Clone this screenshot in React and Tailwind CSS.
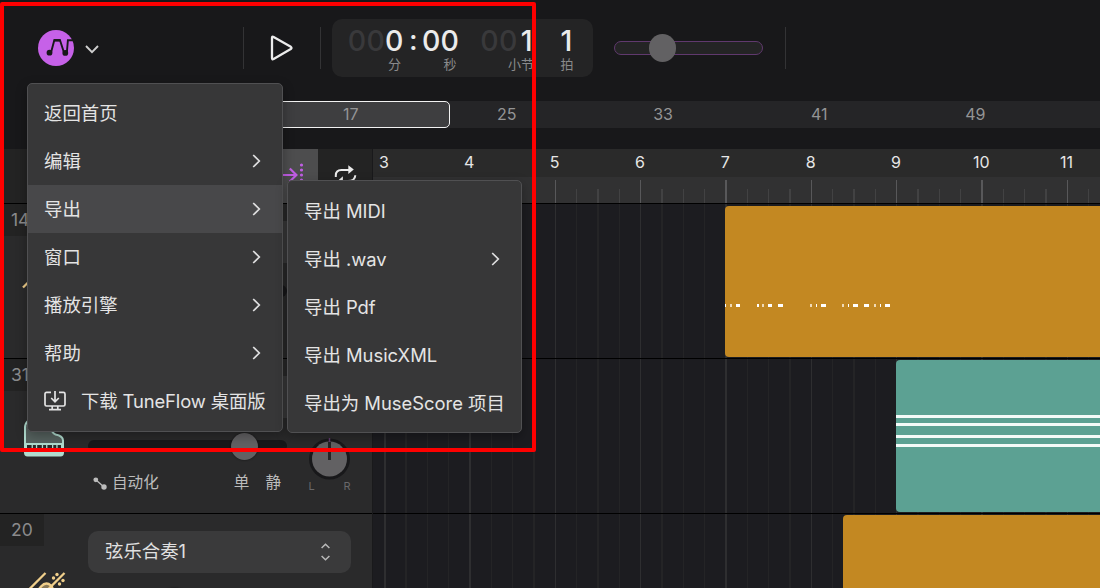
import React from "react";

const MAIN_MENU = [
  { label: "返回首页" },
  { label: "编辑", sub: true },
  { label: "导出", sub: true, active: true },
  { label: "窗口", sub: true },
  { label: "播放引擎", sub: true },
  { label: "帮助", sub: true },
  { label: "下载 TuneFlow 桌面版", icon: true },
];

const EXPORT_MENU = [
  { label: "导出 MIDI" },
  { label: "导出 .wav", sub: true },
  { label: "导出 Pdf" },
  { label: "导出 MusicXML" },
  { label: "导出为 MuseScore 项目" },
];

const SECTIONS = [9, 17, 25, 33, 41, 49];
const BARS = [3, 4, 5, 6, 7, 8, 9, 10, 11];
const BEATS = Array.from({ length: 36 }, (_, i) => i);

/* Note onsets in the first clip: [x, width, faded] */
const NOTES = [
  [0, 1, 0], [5, 2, 1], [10.5, 4.5, 0], [32, 1.5, 0], [37, 2, 1], [42.5, 4.5, 0], [53, 5, 0],
  [85, 2, 1], [90.5, 1.5, 0], [96, 4.5, 0], [117, 2, 1], [122.5, 1.5, 0], [128, 4.5, 0],
  [138.5, 5, 0], [149, 2, 1], [154.5, 1.5, 0], [160, 4.5, 0],
];

function Logo() {
  return (
    <svg width="36" height="36" viewBox="0 0 36 36" fill="none">
      <circle cx="18" cy="18" r="18" fill="#c661e8" />
      <path d="M12.9 23 L16.3 10.2 H22 L25.8 22 M28.9 22 L29.9 10.2 H35.5" stroke="#18181a" strokeWidth="1.9" />
      <path d="M15.8 10.3 H22.4" stroke="#18181a" strokeWidth="2.4" />
      <circle cx="11.5" cy="22.7" r="2.9" fill="#18181a" />
      <circle cx="27.3" cy="22.9" r="2.9" fill="#18181a" />
    </svg>
  );
}

function ChevronRight() {
  return (
    <svg width="9" height="14" viewBox="0 0 9 14" fill="none" stroke="#dededf" strokeWidth="1.7">
      <path d="M1.2 1 L7.3 7 L1.2 13" />
    </svg>
  );
}

function DownloadIcon() {
  return (
    <svg width="22" height="20" viewBox="0 0 22 20" fill="none" stroke="#e4e4e4" strokeWidth="1.7">
      <path d="M7 1.4 H2.6 Q1 1.4 1 3 V13.4 Q1 15 2.6 15 H19.4 Q21 15 21 13.4 V3 Q21 1.4 19.4 1.4 H15" />
      <path d="M11 0 V10.4 M7.2 7 L11 10.8 L14.8 7 M8.2 15 V18.4 M13.8 15 V18.4 M5 18.7 H17" />
    </svg>
  );
}

function MenuItem({ item }) {
  return (
    <div className={"flex h-12 items-center pl-4 pr-[21px] " + (item.active ? "bg-[#48484a]" : "")}>
      {item.icon && (
        <span className="mr-[15px] shrink-0">
          <DownloadIcon />
        </span>
      )}
      <span className={"grow pt-[2px] whitespace-nowrap " + (item.icon ? "tracking-[-0.12px]" : "")}>{item.label}</span>
      {item.sub && <ChevronRight />}
    </div>
  );
}

function Divider() {
  return <div className="h-[42px] w-px shrink-0 bg-[#333335]" />;
}

function Digits({ dim, lit }) {
  return (
    <div className="flex text-[28.5px] leading-[30px] font-medium">
      {dim.split("").map((d, i) => (
        <span key={i} className="w-[18.6px] text-center text-[#39393b]">{d}</span>
      ))}
      {lit.split("").map((d, i) => (
        <span key={i} className="w-[18.6px] text-center text-[#ebebeb]">{d}</span>
      ))}
    </div>
  );
}

function Header() {
  return (
    <header className="flex h-[101px] items-center pb-[5px]">
      <div className="flex w-[243px] shrink-0 items-center gap-[11px] pl-[38px]">
        <Logo />
        <svg width="14" height="9" viewBox="0 0 14 9" fill="none" stroke="#cfcfcf" strokeWidth="1.9" className="mt-[2px]">
          <path d="M1 1 L7 7.2 L13 1" />
        </svg>
      </div>
      <Divider />
      <div className="flex w-[76px] shrink-0 justify-center">
        <svg width="24" height="26" viewBox="0 0 24 26" fill="none" stroke="#ececec" strokeWidth="2.3" strokeLinejoin="round">
          <path d="M2 3 Q2 1.2 3.6 2 L20.8 11.8 Q22.2 13 20.8 14 L3.6 24 Q2 24.8 2 23 Z" />
        </svg>
      </div>
      <Divider />
      <div className="ml-[11px] flex h-[58px] w-[261px] shrink-0 rounded-[10px] bg-[#242425] pl-[15.5px] pt-[7px] text-[13px] text-[#8a8a8b]">
        <div className="flex w-[56px] flex-col items-end">
          <Digits dim="00" lit="0" />
          <span className="mr-[2.5px] leading-4">分</span>
        </div>
        <span className="w-[18.5px] pl-px text-center text-[28.5px] leading-[27px] font-medium text-[#ebebeb]">:</span>
        <div className="flex w-[37px] flex-col items-end">
          <Digits dim="" lit="00" />
          <span className="mr-[2.5px] leading-4">秒</span>
        </div>
        <div className="ml-[22px] flex w-[55px] flex-col items-end">
          <Digits dim="00" lit="1" />
          <span className="mr-[2px] leading-4">小节</span>
        </div>
        <div className="ml-[20.5px] flex w-[20px] flex-col items-center">
          <Digits dim="" lit="1" />
          <span className="translate-x-[0.5px] leading-4">拍</span>
        </div>
      </div>
      <div className="ml-[21px] mr-[22px] flex h-[14px] w-[149px] shrink-0 items-center rounded-full border border-[#60396e] bg-[#242425] pl-[33.5px]">
        <div className="size-[27.5px] shrink-0 rounded-full bg-[#626163]" />
      </div>
      <Divider />
    </header>
  );
}

function Overview() {
  return (
    <div className="relative h-[27px] overflow-hidden pl-[116.4px]">
      <div className="absolute inset-y-0 left-[32px] right-0 bg-[#252527]" />
      <div className="absolute inset-y-0 left-[32px] w-[418px] rounded-[5px] border border-[#f2f2f2] bg-[#3e3e40]" />
      <div className="relative flex h-full items-center pb-[2px] text-base text-[#949495]">
        {SECTIONS.map((n) => (
          <span key={n} className="w-[156.2px] shrink-0 text-center">{n}</span>
        ))}
      </div>
    </div>
  );
}

function PanelToolbar() {
  return (
    <div className="flex h-[54px] bg-[#232323] pl-[264px]">
      <div className="flex h-full w-[54px] justify-center bg-[#4d4d4e] pt-[14px]">
        <svg width="28" height="24" viewBox="0 0 28 24" fill="none" stroke="#c05ee4" strokeWidth="2.2">
          <path d="M0 12 H19 M12.8 5.5 L19.4 12 L12.8 18.5" />
          <path d="M24.5 2 V24" strokeWidth="3.2" strokeDasharray="0 5" strokeLinecap="round" />
        </svg>
      </div>
      <div className="flex h-full w-[54px] justify-center pt-[14px]">
        <svg width="24" height="24" viewBox="0 0 24 24" fill="none" stroke="#ececec" strokeWidth="2">
          <path d="M2.8 14 V12.5 Q2.8 7 8.3 7 H17 M22.3 12.2 Q22 18 15 18 H9" />
          <path d="M15.3 2.2 L20.8 6.6 L15.3 11 Z" fill="#ececec" stroke="none" />
          <path d="M9.9 13.3 L4.8 17.8 L9.9 22 Z" fill="#ececec" stroke="none" />
        </svg>
      </div>
    </div>
  );
}

function GuitarIcon() {
  return (
    <svg width="44" height="44" viewBox="0 0 44 44" fill="none" stroke="#f0cf8b" strokeWidth="2.3">
      <path d="M23.5 5 L1 27.5" />
      <path d="M19 18.5 Q24 13 29 17.5 Q33 22 27 27 Q23 30 22 35 Q16 42 9 36 Q4 29 11 24 Q16 23 19 18.5Z" fill="#877757" />
      <path d="M42.5 5 L22 25.5" />
      <g fill="#f0cf8b" stroke="none">
        <circle cx="35" cy="6.5" r="1.7" />
        <circle cx="31.5" cy="10" r="1.7" />
        <circle cx="41" cy="12.5" r="1.7" />
        <circle cx="37.5" cy="16" r="1.7" />
      </g>
    </svg>
  );
}

function PianoIcon() {
  return (
    <svg width="40" height="42" viewBox="0 0 40 42" fill="none" stroke="#b0dccf" strokeWidth="2">
      <path d="M1 26 V10 Q1 1 12 1 Q24 1 26 7 Q27.5 15 31.5 16.5 Q39 18 39 22.5 V26 Z" fill="#56625f" />
      <path d="M1 26 H39 V34.5 Q39 37.5 36.5 37.5 H3.5 Q1 37.5 1 34.5 Z" fill="#b0dccf" />
      <path d="M3 29.5 H37" stroke="#2a2a2b" strokeWidth="5" strokeDasharray="4.6 1.3 3 1.3" />
    </svg>
  );
}

function Track({ num, name, icon, thumb }) {
  return (
    <div className="flex h-[155px] shrink-0 border-t border-black">
      <div className="flex w-[88px] shrink-0 flex-col">
        <div className="flex h-8 w-11 items-center bg-[#232323] pl-[11px] pt-px text-[17.5px] text-[#8b8b8c]">{num}</div>
        <div className="pl-[22px] pt-[22px]">{icon}</div>
      </div>
      <div className="w-[263px] shrink-0 pt-[17px]">
        <div className="flex h-[42px] items-center rounded-[10px] bg-[#3a3a3b] pl-[17px] pr-[21px] text-[18.4px] text-[#e0e0e0]">
          <span className="grow">{name}</span>
          <svg width="9" height="18" viewBox="0 0 9 18" fill="none" stroke="#b9b9b9" strokeWidth="1.5">
            <path d="M0.6 5 L4.5 1.2 L8.4 5 M0.6 13 L4.5 16.8 L8.4 13" />
          </svg>
        </div>
        <div className="flex">
          <div className="w-[199px] pt-[22px]">
            <div className="flex h-[12px] items-center rounded-md bg-[#18181a]">
              <div
                className="size-[27px] shrink-0 rounded-full bg-[#626163] shadow-[0_0_2px_#111]"
                style={{ marginLeft: thumb }}
              />
            </div>
            <div className="mt-[19px] flex items-center text-[15.6px] leading-6 text-[#bcbcbc]">
              <svg width="14" height="13" viewBox="0 0 14 13" className="ml-[5px] mr-[5px]" fill="#bcbcbc" stroke="#bcbcbc">
                <path d="M2.5 2.5 L11.5 10.5" strokeWidth="1.3" />
                <circle cx="2.8" cy="2.8" r="2.4" stroke="none" />
                <circle cx="11" cy="10" r="2.7" stroke="none" />
              </svg>
              <span className="grow">自动化</span>
              <span>单</span>
              <span className="ml-4 mr-[6px]">静</span>
            </div>
          </div>
          <div className="ml-[21.5px] w-[42px] pt-[20px]">
            <svg width="42" height="42" viewBox="0 0 42 42">
              <circle cx="20.5" cy="21" r="20.5" fill="#18181a" />
              <circle cx="20.5" cy="21" r="17.5" fill="#626163" />
              <path d="M20.5 0 V4" stroke="#60396e" strokeWidth="1.5" />
              <path d="M20.5 4 V22" stroke="#242425" strokeWidth="3" />
            </svg>
            <div className="-mt-px flex justify-between text-[11px] leading-[14px] text-[#68686a]">
              <span>L</span>
              <span>R</span>
            </div>
          </div>
        </div>
      </div>
    </div>
  );
}

function Ruler() {
  return (
    <div className="h-[54px] bg-[#313132]">
      <div className="flex h-7 items-center bg-[#2a2a2a] text-base text-[#e6e6e6]">
        {BARS.map((n) => (
          <span key={n} className="w-[85.333px] shrink-0 pb-[2px] text-center">
            <span className="inline-block -translate-x-[31.7px]">{n}</span>
          </span>
        ))}
      </div>
      <div className="flex h-[26px] items-end pl-[11px]">
        {BEATS.map((b) => (
          <div key={b} className="w-[21.333px] shrink-0">
            {b % 4 === 0 ? <div className="h-[23px] w-[1.5px] bg-[#58585a]" /> : <div className="h-[14px] w-[1.5px] bg-[#424243]" />}
          </div>
        ))}
      </div>
    </div>
  );
}

function Lane({ children }) {
  return (
    <div className="relative h-[155px] shrink-0 border-t border-black">
      <div className="flex h-full pl-[11px]">
        {BEATS.map((b) => (
          <div key={b} className="h-full w-[21.333px] shrink-0">
            <div className={b % 4 === 0 ? "h-full w-[1.5px] bg-[#2e2e30]" : "h-full w-[1.5px] bg-[#242426]"} />
          </div>
        ))}
      </div>
      {children}
    </div>
  );
}

function Arrangement() {
  return (
    <div className="min-w-0 grow overflow-hidden bg-[#1c1c20]">
      <Ruler />
      <Lane>
        <div className="absolute left-[352px] right-0 top-[2px] h-[151px] rounded-l-[4px] bg-[#c38822]">
          {NOTES.map(([x, w, faded]) => (
            <div
              key={x}
              className={"absolute top-[98px] h-[3px] " + (faded ? "bg-[#f0dab5]" : "bg-white")}
              style={{ left: x, width: w }}
            />
          ))}
        </div>
      </Lane>
      <Lane>
        <div className="absolute left-[523px] right-0 top-px flex h-[152px] flex-col rounded-l-[4px] bg-[#5ca193] pt-[55px]">
          <div className="h-[3px] bg-[#f4faf8]" />
          <div className="mt-[5px] h-[3px] bg-[#f4faf8]" />
          <div className="mt-[9px] h-[3px] bg-[#f4faf8]" />
          <div className="mt-[6px] h-[3px] bg-[#f4faf8]" />
        </div>
      </Lane>
      <Lane>
        <div className="absolute left-[470px] right-0 top-px h-[152px] rounded-l-[4px] bg-[#c38822]" />
      </Lane>
    </div>
  );
}

export default function App() {
  return (
    <div className="relative flex h-[588px] w-[1100px] flex-col overflow-hidden bg-[#18181a] font-['Inter','Noto_Sans_CJK_SC',sans-serif]">
      <Header />
      <Overview />
      <div className="mt-[21px] flex h-[439px] overflow-hidden">
        <div className="w-[373px] shrink-0 overflow-hidden border-r border-[#19191b] bg-[#2a2a2b]">
          <PanelToolbar />
          <Track num="14" thumb={143} icon={<div className="pt-[2px]"><GuitarIcon /></div>} />
          <Track num="31" thumb={143} icon={<div className="pl-[2px] pt-[5px]"><PianoIcon /></div>} />
          <Track num="20" name="弦乐合奏1" thumb={73} icon={<GuitarIcon />} />
        </div>
        <Arrangement />
      </div>

      <div className="absolute left-[27px] top-[83px] w-[256px] rounded-[5px] border border-[#505052] bg-[#373738] pt-[5px] pb-[6px] text-[18.4px] text-[#e4e4e4] shadow-[0_4px_12px_rgba(0,0,0,0.3)]">
        {MAIN_MENU.map((item) => (
          <MenuItem key={item.label} item={item} />
        ))}
      </div>
      <div className="absolute left-[287px] top-[180px] w-[235px] rounded-[5px] border border-[#505052] bg-[#373738] py-[5.5px] text-[18.4px] text-[#e4e4e4] shadow-[0_4px_12px_rgba(0,0,0,0.3)]">
        {EXPORT_MENU.map((item) => (
          <MenuItem key={item.label} item={item} />
        ))}
      </div>

      <div className="absolute left-0 top-[2px] h-[450px] w-[536px] rounded-[2px] border-4 border-[#fe0000]" />
    </div>
  );
}
